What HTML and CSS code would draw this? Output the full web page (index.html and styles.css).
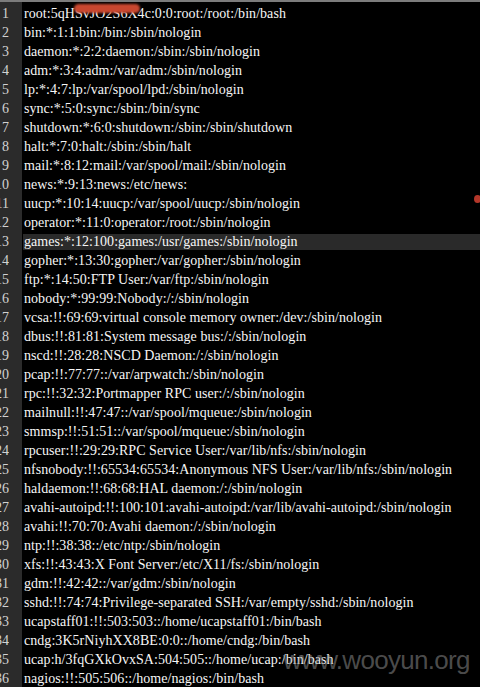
FILE: index.html
```html
<!DOCTYPE html>
<html>
<head>
<meta charset="utf-8">
<link rel="stylesheet" href="styles.css">
</head>
<body>
<div class="editor">
  <div class="lines">
    <div class="row"><span class="num">1</span><span class="code">root:5qHSvJO2S6X4c:0:0:root:/root:/bin/bash</span></div>
    <div class="row"><span class="num">2</span><span class="code">bin:*:1:1:bin:/bin:/sbin/nologin</span></div>
    <div class="row"><span class="num">3</span><span class="code">daemon:*:2:2:daemon:/sbin:/sbin/nologin</span></div>
    <div class="row"><span class="num">4</span><span class="code">adm:*:3:4:adm:/var/adm:/sbin/nologin</span></div>
    <div class="row"><span class="num">5</span><span class="code">lp:*:4:7:lp:/var/spool/lpd:/sbin/nologin</span></div>
    <div class="row"><span class="num">6</span><span class="code">sync:*:5:0:sync:/sbin:/bin/sync</span></div>
    <div class="row"><span class="num">7</span><span class="code">shutdown:*:6:0:shutdown:/sbin:/sbin/shutdown</span></div>
    <div class="row"><span class="num">8</span><span class="code">halt:*:7:0:halt:/sbin:/sbin/halt</span></div>
    <div class="row"><span class="num">9</span><span class="code">mail:*:8:12:mail:/var/spool/mail:/sbin/nologin</span></div>
    <div class="row"><span class="num">10</span><span class="code">news:*:9:13:news:/etc/news:</span></div>
    <div class="row"><span class="num">11</span><span class="code">uucp:*:10:14:uucp:/var/spool/uucp:/sbin/nologin</span></div>
    <div class="row"><span class="num">12</span><span class="code">operator:*:11:0:operator:/root:/sbin/nologin</span></div>
    <div class="row current"><span class="num">13</span><span class="code">games:*:12:100:games:/usr/games:/sbin/nologin</span></div>
    <div class="row"><span class="num">14</span><span class="code">gopher:*:13:30:gopher:/var/gopher:/sbin/nologin</span></div>
    <div class="row"><span class="num">15</span><span class="code">ftp:*:14:50:FTP User:/var/ftp:/sbin/nologin</span></div>
    <div class="row"><span class="num">16</span><span class="code">nobody:*:99:99:Nobody:/:/sbin/nologin</span></div>
    <div class="row"><span class="num">17</span><span class="code">vcsa:!!:69:69:virtual console memory owner:/dev:/sbin/nologin</span></div>
    <div class="row"><span class="num">18</span><span class="code">dbus:!!:81:81:System message bus:/:/sbin/nologin</span></div>
    <div class="row"><span class="num">19</span><span class="code">nscd:!!:28:28:NSCD Daemon:/:/sbin/nologin</span></div>
    <div class="row"><span class="num">20</span><span class="code">pcap:!!:77:77::/var/arpwatch:/sbin/nologin</span></div>
    <div class="row"><span class="num">21</span><span class="code">rpc:!!:32:32:Portmapper RPC user:/:/sbin/nologin</span></div>
    <div class="row"><span class="num">22</span><span class="code">mailnull:!!:47:47::/var/spool/mqueue:/sbin/nologin</span></div>
    <div class="row"><span class="num">23</span><span class="code">smmsp:!!:51:51::/var/spool/mqueue:/sbin/nologin</span></div>
    <div class="row"><span class="num">24</span><span class="code">rpcuser:!!:29:29:RPC Service User:/var/lib/nfs:/sbin/nologin</span></div>
    <div class="row"><span class="num">25</span><span class="code">nfsnobody:!!:65534:65534:Anonymous NFS User:/var/lib/nfs:/sbin/nologin</span></div>
    <div class="row"><span class="num">26</span><span class="code">haldaemon:!!:68:68:HAL daemon:/:/sbin/nologin</span></div>
    <div class="row"><span class="num">27</span><span class="code">avahi-autoipd:!!:100:101:avahi-autoipd:/var/lib/avahi-autoipd:/sbin/nologin</span></div>
    <div class="row"><span class="num">28</span><span class="code">avahi:!!:70:70:Avahi daemon:/:/sbin/nologin</span></div>
    <div class="row"><span class="num">29</span><span class="code">ntp:!!:38:38::/etc/ntp:/sbin/nologin</span></div>
    <div class="row"><span class="num">30</span><span class="code">xfs:!!:43:43:X Font Server:/etc/X11/fs:/sbin/nologin</span></div>
    <div class="row"><span class="num">31</span><span class="code">gdm:!!:42:42::/var/gdm:/sbin/nologin</span></div>
    <div class="row"><span class="num">32</span><span class="code">sshd:!!:74:74:Privilege-separated SSH:/var/empty/sshd:/sbin/nologin</span></div>
    <div class="row"><span class="num">33</span><span class="code">ucapstaff01:!!:503:503::/home/ucapstaff01:/bin/bash</span></div>
    <div class="row"><span class="num">34</span><span class="code">cndg:3K5rNiyhXX8BE:0:0::/home/cndg:/bin/bash</span></div>
    <div class="row"><span class="num">35</span><span class="code">ucap:h/3fqGXkOvxSA:504:505::/home/ucap:/bin/bash</span></div>
    <div class="row"><span class="num">36</span><span class="code">nagios:!!:505:506::/home/nagios:/bin/bash</span></div>
  </div>
  <div class="redact"></div>
  <div class="dot"></div>
  <div class="watermark">www.wooyun.org</div>
</div>
</body>
</html>
```

FILE: styles.css
```css
html, body {
  margin: 0;
  padding: 0;
  background: #000;
}
.editor {
  position: relative;
  width: 480px;
  height: 687px;
  overflow: hidden;
  background: #000;
  border-top: 2px solid #7c7c7c;
  box-sizing: border-box;
  background-image: linear-gradient(to right, #2b2b2b 0, #2b2b2b 22px, #000 22px);
}
.lines {
  display: flex;
  flex-direction: column;
  padding-top: 2px;
}
.row {
  display: flex;
  height: 19px;
  align-items: center;
  font-family: "Liberation Serif", serif;
  font-size: 14px;
  white-space: nowrap;
}
.num {
  width: 9px;
  flex: none;
  direction: rtl;
  overflow: hidden;
  text-align: right;
  color: #d2d2d2;
  margin-right: 15px;
}
.code {
  color: #f6f6f6;
  flex: 1;
  letter-spacing: 0.05px;
}
.row.current .code {
  background: #2a2a2a;
  margin-left: -1px;
  padding-left: 1px;
}
.redact {
  position: absolute;
  left: 74px;
  top: 2px;
  width: 66px;
  height: 9px;
  border-radius: 5px;
  background: #c9472f;
  filter: blur(0.8px);
}
.dot {
  position: absolute;
  left: 474px;
  top: 193px;
  width: 7px;
  height: 8px;
  border-radius: 50%;
  background: #b3372a;
  filter: blur(0.6px);
}
.watermark {
  position: absolute;
  left: 283px;
  top: 643px;
  font-family: "Liberation Sans", Arial, sans-serif;
  font-size: 26px;
  line-height: 30px;
  color: rgba(140, 140, 140, 0.55);
  letter-spacing: -0.7px;
}
```
